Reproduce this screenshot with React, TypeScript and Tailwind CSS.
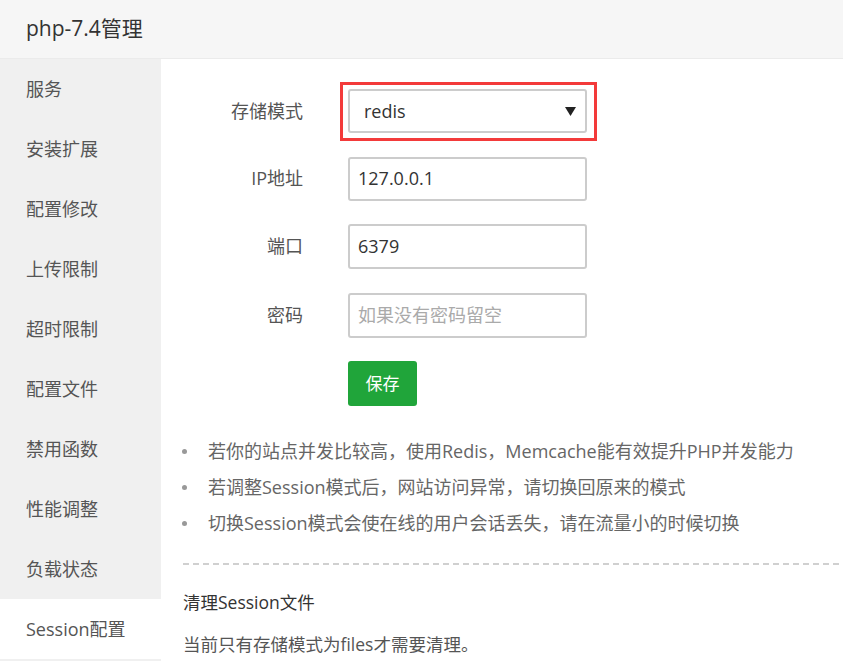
const menu = ['服务', '安装扩展', '配置修改', '上传限制', '超时限制', '配置文件', '禁用函数', '性能调整', '负载状态', 'Session配置']

const tips = [
  '若你的站点并发比较高，使用Redis，Memcache能有效提升PHP并发能力',
  '若调整Session模式后，网站访问异常，请切换回原来的模式',
  '切换Session模式会使在线的用户会话丢失，请在流量小的时候切换',
]

function Row({ label, children }: { label: string; children: React.ReactNode }) {
  return (
    <div className="flex items-center">
      <span className="w-[142px] text-right text-[18px] text-[#555]">{label}</span>
      <div className="ml-[45px]">{children}</div>
    </div>
  )
}

export default function App() {
  return (
    <div
      className="flex h-[661px] w-[843px] flex-col overflow-hidden bg-white"
      style={{ fontFamily: '"Open Sans", "Noto Sans CJK SC", sans-serif' }}
    >
      <div className="flex h-[59px] shrink-0 items-center border-b border-[#ebebeb] bg-[#f6f6f6] px-[26px] text-[21px] text-[#333]">
        php-7.4管理
      </div>
      <div className="flex flex-1">
        <div className="flex w-[161px] shrink-0 flex-col bg-[#f0f0f0]">
          {menu.map((m) => (
            <div
              key={m}
              className={
                'flex h-[60px] shrink-0 items-center pl-[26px] text-[18px] text-[#555] ' +
                (m === 'Session配置' ? 'bg-white text-[#333]' : '')
              }
            >
              {m}
            </div>
          ))}
        </div>
        <div className="flex-1 pt-[30px]">
          <div className="flex flex-col gap-[23.5px]">
            <Row label="存储模式">
              <div className="relative flex h-[44px] w-[239px] items-center justify-between rounded-[3px] border-2 border-[#ccc] pl-[14px] pr-[9px] text-[18px] text-[#333]">
                <span>redis</span>
                <svg width="11" height="10" viewBox="0 0 11 10">
                  <path d="M0 1h11L5.5 10z" fill="#222" />
                </svg>
                <span className="pointer-events-none absolute -bottom-[10px] -left-[10px] -right-[12px] -top-[9px] border-[3px] border-[#f33a3a]" />
              </div>
            </Row>
            <Row label="IP地址">
              <div className="flex h-[44px] w-[239px] items-center rounded-[3px] border-2 border-[#ccc] px-[8px] text-[18px] text-[#333]">
                127.0.0.1
              </div>
            </Row>
            <Row label="端口">
              <div className="flex h-[45px] w-[239px] items-center rounded-[3px] border-2 border-[#ccc] px-[8px] text-[18px] text-[#333]">
                6379
              </div>
            </Row>
            <Row label="密码">
              <div className="flex h-[45px] w-[239px] items-center rounded-[3px] border-2 border-[#ccc] px-[8px] text-[18px] text-[#aaa]">
                如果没有密码留空
              </div>
            </Row>
            <Row label="">
              <button className="flex h-[45px] w-[69px] items-center justify-center rounded-[3px] bg-[#20a53a] text-[17px] text-white">
                保存
              </button>
            </Row>
          </div>
          <ul className="mt-[27px] pl-[21px]">
            {tips.map((t) => (
              <li key={t} className="flex h-[36px] items-center text-[18px] text-[#666]">
                <span className="mr-[21px] h-[5px] w-[5px] shrink-0 rounded-full bg-[#999]" />
                {t}
              </li>
            ))}
          </ul>
          <div className="ml-[22px] mt-[22px] h-[2px] bg-[repeating-linear-gradient(90deg,#d0d0d0_0_6px,transparent_6px_10px)]" />
          <div className="ml-[22px] mt-[24px] text-[17.5px] text-[#333]">清理Session文件</div>
          <div className="ml-[22px] mt-[16px] text-[17.5px] text-[#555]">当前只有存储模式为files才需要清理。</div>
        </div>
      </div>
    </div>
  )
}
